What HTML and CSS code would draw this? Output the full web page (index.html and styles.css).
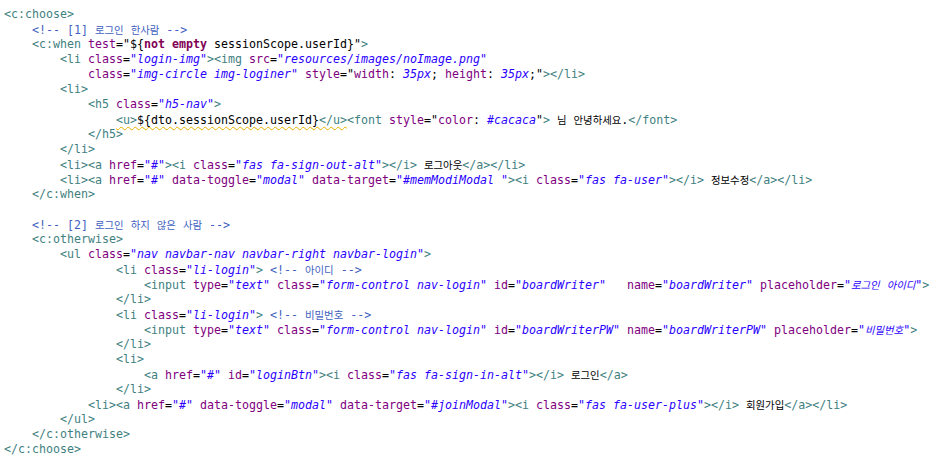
FILE: index.html
```html
<!DOCTYPE html>
<html lang="ko">
<head>
    <meta charset="UTF-8">
    <meta name="viewport" content="width=device-width, initial-scale=1.0">
    <title>header.jsp</title>
    <link rel="stylesheet" href="styles.css">
</head>
<body>
<div class="editor">
<div class="line"><span class="t">&lt;c:choose&gt;</span></div>
<div class="line">    <span class="c">&lt;!-- [1] <span class="ko">로그인</span> <span class="ko">한사람</span> --&gt;</span></div>
<div class="line">    <span class="t">&lt;c:when</span> <span class="a">test</span>="${<span class="k">not empty</span> sessionScope.userId}"<span class="t">&gt;</span></div>
<div class="line">        <span class="t">&lt;li</span> <span class="a">class</span>=<span class="v">"login-img"</span><span class="t">&gt;&lt;img</span> <span class="a">src</span>=<span class="v">"resources/images/noImage.png"</span></div>
<div class="line">            <span class="a">class</span>=<span class="v">"img-circle img-loginer"</span> <span class="a">style</span>="<span class="a">width</span>: <span class="v">35px</span>; <span class="a">height</span>: <span class="v">35px</span>;"<span class="t">&gt;&lt;/li&gt;</span></div>
<div class="line">        <span class="t">&lt;li&gt;</span></div>
<div class="line">            <span class="t">&lt;h5</span> <span class="a">class</span>=<span class="v">"h5-nav"</span><span class="t">&gt;</span></div>
<div class="line">                <span class="warn"><span class="t">&lt;u&gt;</span>${dto.sessionScope.userId}<span class="t">&lt;/u&gt;</span></span><span class="t">&lt;font</span> <span class="a">style</span>="<span class="a">color</span>: <span class="v">#cacaca</span>"<span class="t">&gt;</span> <span class="ko">님</span> <span class="ko">안녕하세요</span>.<span class="t">&lt;/font&gt;</span></div>
<div class="line">            <span class="t">&lt;/h5&gt;</span></div>
<div class="line">        <span class="t">&lt;/li&gt;</span></div>
<div class="line">        <span class="t">&lt;li&gt;&lt;a</span> <span class="a">href</span>=<span class="v">"#"</span><span class="t">&gt;&lt;i</span> <span class="a">class</span>=<span class="v">"fas fa-sign-out-alt"</span><span class="t">&gt;&lt;/i&gt;</span> <span class="ko">로그아웃</span><span class="t">&lt;/a&gt;&lt;/li&gt;</span></div>
<div class="line">        <span class="t">&lt;li&gt;&lt;a</span> <span class="a">href</span>=<span class="v">"#"</span> <span class="a">data-toggle</span>=<span class="v">"modal"</span> <span class="a">data-target</span>=<span class="v">"#memModiModal "</span><span class="t">&gt;&lt;i</span> <span class="a">class</span>=<span class="v">"fas fa-user"</span><span class="t">&gt;&lt;/i&gt;</span> <span class="ko">정보수정</span><span class="t">&lt;/a&gt;&lt;/li&gt;</span></div>
<div class="line">    <span class="t">&lt;/c:when&gt;</span></div>
<div class="line"></div>
<div class="line">    <span class="c">&lt;!-- [2] <span class="ko">로그인</span> <span class="ko">하지</span> <span class="ko">않은</span> <span class="ko">사람</span> --&gt;</span></div>
<div class="line">    <span class="t">&lt;c:otherwise&gt;</span></div>
<div class="line">        <span class="t">&lt;ul</span> <span class="a">class</span>=<span class="v">"nav navbar-nav navbar-right navbar-login"</span><span class="t">&gt;</span></div>
<div class="line">                <span class="t">&lt;li</span> <span class="a">class</span>=<span class="v">"li-login"</span><span class="t">&gt;</span> <span class="c">&lt;!-- <span class="ko">아이디</span> --&gt;</span></div>
<div class="line">                    <span class="t">&lt;input</span> <span class="a">type</span>=<span class="v">"text"</span> <span class="a">class</span>=<span class="v">"form-control nav-login"</span> <span class="a">id</span>=<span class="v">"boardWriter"</span>   <span class="a">name</span>=<span class="v">"boardWriter"</span> <span class="a">placeholder</span>=<span class="v">"<span class="ko">로그인</span> <span class="ko">아이디</span>"</span><span class="t">&gt;</span></div>
<div class="line">                <span class="t">&lt;/li&gt;</span></div>
<div class="line">                <span class="t">&lt;li</span> <span class="a">class</span>=<span class="v">"li-login"</span><span class="t">&gt;</span> <span class="c">&lt;!-- <span class="ko">비밀번호</span> --&gt;</span></div>
<div class="line">                    <span class="t">&lt;input</span> <span class="a">type</span>=<span class="v">"text"</span> <span class="a">class</span>=<span class="v">"form-control nav-login"</span> <span class="a">id</span>=<span class="v">"boardWriterPW"</span> <span class="a">name</span>=<span class="v">"boardWriterPW"</span> <span class="a">placeholder</span>=<span class="v">"<span class="ko">비밀번호</span>"</span><span class="t">&gt;</span></div>
<div class="line">                <span class="t">&lt;/li&gt;</span></div>
<div class="line">                <span class="t">&lt;li&gt;</span></div>
<div class="line">                    <span class="t">&lt;a</span> <span class="a">href</span>=<span class="v">"#"</span> <span class="a">id</span>=<span class="v">"loginBtn"</span><span class="t">&gt;&lt;i</span> <span class="a">class</span>=<span class="v">"fas fa-sign-in-alt"</span><span class="t">&gt;&lt;/i&gt;</span> <span class="ko">로그인</span><span class="t">&lt;/a&gt;</span></div>
<div class="line">                <span class="t">&lt;/li&gt;</span></div>
<div class="line">            <span class="t">&lt;li&gt;&lt;a</span> <span class="a">href</span>=<span class="v">"#"</span> <span class="a">data-toggle</span>=<span class="v">"modal"</span> <span class="a">data-target</span>=<span class="v">"#joinModal"</span><span class="t">&gt;&lt;i</span> <span class="a">class</span>=<span class="v">"fas fa-user-plus"</span><span class="t">&gt;&lt;/i&gt;</span> <span class="ko">회원가입</span><span class="t">&lt;/a&gt;&lt;/li&gt;</span></div>
<div class="line">        <span class="t">&lt;/ul&gt;</span></div>
<div class="line">    <span class="t">&lt;/c:otherwise&gt;</span></div>
<div class="line"><span class="t">&lt;/c:choose&gt;</span></div>
</div>
</body>
</html>
```

FILE: styles.css
```css
body {
    margin: 0;
    background: #fff;
    color: #000;
}

.editor {
    padding: 7px 0 0 4px;
    font-family: 'DejaVu Sans Mono', monospace;
    font-size: 11.63px;
}

.line {
    height: 15px;
    line-height: 15px;
    white-space: pre;
}

/* tags */
.t {
    color: #3f7f7f;
}

/* attribute names */
.a {
    color: #7f007f;
}

/* attribute values */
.v {
    color: #2a00ff;
    font-style: italic;
}

/* comments */
.c {
    color: #3f5fbf;
}

/* EL keywords */
.k {
    color: #7f0055;
    font-weight: bold;
}

.ko {
    font-family: 'Noto Sans CJK KR', sans-serif;
    font-size: 10.4px;
}

.warn {
    text-decoration: underline wavy #e8b000;
    text-decoration-thickness: 1px;
    text-underline-offset: 2px;
}
```
